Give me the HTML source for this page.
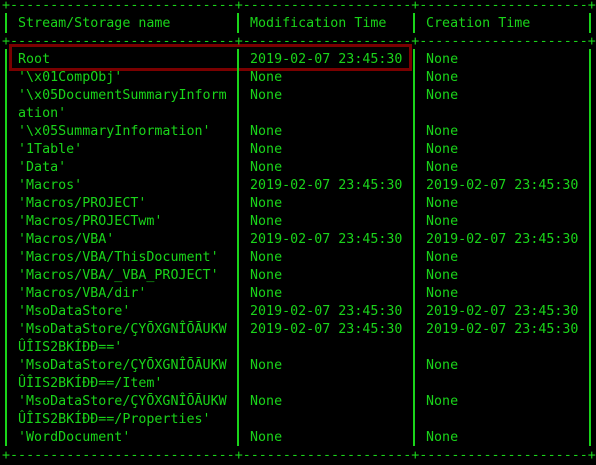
<!DOCTYPE html>
<html><head><meta charset="utf-8"><style>
html,body{margin:0;padding:0;background:#000;width:596px;height:464px;overflow:hidden;}
pre{position:absolute;margin:0;font-family:"DejaVu Sans Mono","Liberation Mono",monospace;font-size:13.33px;line-height:18px;color:#1ad41a;}
.box{position:absolute;left:9px;top:44px;width:397px;height:21px;border:3px solid #7a0000;}
.v{position:absolute;width:2px;background:#1ad41a;}
</style></head><body>
<div class="box"></div>
<pre style="left:2px;top:-3px">+----------------------------+---------------------+---------------------+</pre>
<pre style="left:2px;top:33px">+----------------------------+---------------------+---------------------+</pre>
<pre style="left:2px;top:447px">+----------------------------+---------------------+---------------------+</pre>
<div class="v" style="left:5px;top:13px;height:20px"></div>
<div class="v" style="left:237px;top:13px;height:20px"></div>
<div class="v" style="left:413px;top:13px;height:20px"></div>
<div class="v" style="left:589px;top:13px;height:20px"></div>
<div class="v" style="left:5px;top:49px;height:397px"></div>
<div class="v" style="left:237px;top:49px;height:397px"></div>
<div class="v" style="left:413px;top:49px;height:397px"></div>
<div class="v" style="left:589px;top:49px;height:397px"></div>
<pre style="left:18px;top:15px">Stream/Storage name</pre>
<pre style="left:250px;top:15px">Modification Time</pre>
<pre style="left:426px;top:15px">Creation Time</pre>
<pre style="left:18px;top:51px">Root
'\x01CompObj'
'\x05DocumentSummaryInform
ation'
'\x05SummaryInformation'
'1Table'
'Data'
'Macros'
'Macros/PROJECT'
'Macros/PROJECTwm'
'Macros/VBA'
'Macros/VBA/ThisDocument'
'Macros/VBA/_VBA_PROJECT'
'Macros/VBA/dir'
'MsoDataStore'
'MsoDataStore/ÇYŌXGNÎŌĀUKW
ÛÎIS2BKÍÐÐ=='
'MsoDataStore/ÇYŌXGNÎŌĀUKW
ÛÎIS2BKÍÐÐ==/Item'
'MsoDataStore/ÇYŌXGNÎŌĀUKW
ÛÎIS2BKÍÐÐ==/Properties'
'WordDocument'</pre>
<pre style="left:250px;top:51px">2019-02-07 23:45:30
None
None

None
None
None
2019-02-07 23:45:30
None
None
2019-02-07 23:45:30
None
None
None
2019-02-07 23:45:30
2019-02-07 23:45:30

None

None

None</pre>
<pre style="left:426px;top:51px">None
None
None

None
None
None
2019-02-07 23:45:30
None
None
2019-02-07 23:45:30
None
None
None
2019-02-07 23:45:30
2019-02-07 23:45:30

None

None

None</pre>
</body></html>
